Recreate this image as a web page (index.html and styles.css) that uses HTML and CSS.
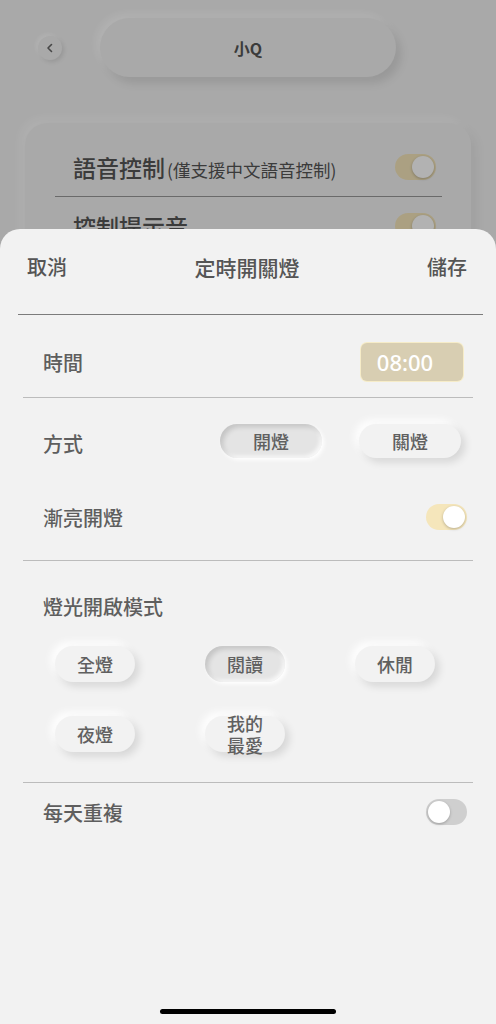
FILE: index.html
```html
<!DOCTYPE html>
<html lang="zh-Hant">
<head>
    <meta charset="UTF-8">
    <meta name="viewport" content="width=device-width, initial-scale=1.0">
    <title>定時開關燈</title>
    <link rel="stylesheet" href="styles.css">
</head>
<body>
    <div class="backdrop">
        <div class="nav">
            <div class="back-btn">
                <svg width="10" height="10" viewBox="0 0 10 10"><path d="M6.5 1.5 L3 5 L6.5 8.5" fill="none" stroke="#666" stroke-width="1.6" stroke-linecap="round" stroke-linejoin="round"/></svg>
            </div>
            <div class="nav-title">小Q</div>
        </div>
        <div class="card">
            <div class="card-row">
                <span class="card-label">語音控制<small>(僅支援中文語音控制)</small></span>
                <span class="toggle on"></span>
            </div>
            <div class="card-divider"></div>
            <div class="card-row">
                <span class="card-label">控制提示音</span>
                <span class="toggle on"></span>
            </div>
        </div>
    </div>

    <div class="sheet">
        <div class="sheet-head">
            <span>取消</span>
            <span class="sheet-title">定時開關燈</span>
            <span>儲存</span>
        </div>
        <div class="divider-dark"></div>

        <div class="row row-time">
            <span class="label">時間</span>
            <span class="time-box">08:00</span>
        </div>
        <div class="divider"></div>

        <div class="row row-method">
            <span class="label">方式</span>
            <div class="method-btns">
                <button class="pill wide pressed">開燈</button>
                <button class="pill wide">關燈</button>
            </div>
        </div>
        <div class="row row-fade">
            <span class="label">漸亮開燈</span>
            <span class="toggle on"></span>
        </div>
        <div class="divider"></div>

        <div class="mode-title label">燈光開啟模式</div>
        <div class="mode-grid">
            <button class="pill">全燈</button>
            <button class="pill pressed">閱讀</button>
            <button class="pill">休閒</button>
            <button class="pill">夜燈</button>
            <button class="pill">我的最愛</button>
        </div>
        <div class="divider"></div>

        <div class="row row-repeat">
            <span class="label">每天重複</span>
            <span class="toggle"></span>
        </div>

        <div class="home-bar"></div>
    </div>
</body>
</html>
```

FILE: styles.css
```css
* {
    box-sizing: border-box;
}

body, html {
    margin: 0;
    height: 1024px;
    overflow: hidden;
}

body {
    display: flex;
    flex-direction: column;
    background: #f2f2f2;
    font-family: 'Noto Sans CJK TC', 'Noto Sans', sans-serif;
    color: #606060;
}

/* page behind the sheet, dimmed */
.backdrop {
    position: relative;
    height: 249px;
    flex-shrink: 0;
    overflow: hidden;
    padding-top: 18px;
}

.backdrop::after {
    content: '';
    position: absolute;
    inset: 0;
    background: rgba(0, 0, 0, 0.3);
}

.nav {
    display: flex;
    align-items: center;
    height: 59px;
    padding-left: 38px;
}

.back-btn {
    width: 24px;
    height: 24px;
    border-radius: 50%;
    display: flex;
    justify-content: center;
    align-items: center;
    background: #f2f2f2;
    box-shadow: 2px 2px 4px rgba(0, 0, 0, 0.1), -2px -2px 4px #fff;
}

.nav-title {
    margin-left: 38px;
    width: 296px;
    height: 59px;
    border-radius: 30px;
    display: flex;
    justify-content: center;
    align-items: center;
    font-size: 16px;
    font-weight: 700;
    color: #555;
    background: #f2f2f2;
    box-shadow: 5px 6px 10px rgba(0, 0, 0, 0.1), -4px -4px 10px #fff;
}

.card {
    margin: 46px 25px 0;
    padding: 15px 29px 20px 30px;
    border-radius: 22px;
    background: #f3f3f3;
    box-shadow: 5px 5px 12px rgba(0, 0, 0, 0.06), -5px -5px 12px rgba(255, 255, 255, 0.7);
}

.card-row {
    display: flex;
    align-items: center;
    justify-content: space-between;
    height: 58px;
    padding: 0 6px 0 18px;
}

.card-label {
    font-size: 23px;
    font-weight: 500;
    color: #555;
}

.card-label small {
    font-size: 17.5px;
    font-weight: 400;
    margin-left: 2px;
}

.card-divider {
    height: 1px;
    background: #999;
}

/* bottom sheet */
.sheet {
    position: relative;
    z-index: 1;
    flex: 1;
    margin-top: -20px;
    display: flex;
    flex-direction: column;
    background: #f2f2f2;
    border-radius: 20px 20px 0 0;
}

.sheet-head {
    display: flex;
    justify-content: space-between;
    height: 85px;
    padding: 25px 29px 0 27px;
    font-size: 20px;
    line-height: 26px;
    font-weight: 500;
    color: #555;
}

.sheet-title {
    font-size: 21px;
}

.divider-dark {
    height: 1px;
    margin: 0 13px 0 18px;
    background: #7c7c7c;
}

.divider {
    height: 1px;
    margin: 0 23px;
    background: #bcbcbc;
}

.row {
    display: flex;
    align-items: center;
    justify-content: space-between;
    padding: 0 29px 0 43px;
}

.label {
    font-size: 20px;
    font-weight: 500;
    color: #5e5e5e;
}

.row-time {
    height: 82px;
    padding-top: 12px;
    padding-right: 33px;
}

.time-box {
    width: 102px;
    height: 38px;
    padding-right: 14px;
    border-radius: 6px;
    display: flex;
    justify-content: center;
    align-items: center;
    background: #d8ceb2;
    box-shadow: 0 0 0 1px #f6ecc8;
    color: #fff;
    font-family: 'Noto Sans', sans-serif;
    font-size: 22px;
    font-weight: 500;
}

.row-method {
    height: 86px;
    padding-right: 35px;
}

.row-method .label {
    padding-top: 5px;
}

.method-btns {
    display: flex;
    gap: 37px;
}

.row-fade {
    height: 66px;
    margin-bottom: 10px;
}

.pill {
    width: 80px;
    height: 36px;
    padding: 0 20px;
    border: none;
    border-radius: 18px;
    display: flex;
    justify-content: center;
    align-items: center;
    font-family: inherit;
    font-size: 18px;
    line-height: 22px;
    font-weight: 500;
    color: #606060;
    background: #f2f2f2;
    box-shadow: 4px 4px 8px rgba(0, 0, 0, 0.12), -4px -4px 8px #fff;
}

.pill.wide {
    width: 102px;
    height: 34px;
}

.pill.pressed {
    background: #e4e4e4;
    box-shadow: inset 3px 3px 5px rgba(0, 0, 0, 0.14), inset -2px -2px 4px rgba(255, 255, 255, 0.8), 2px 2px 4px #fff;
}

.mode-title {
    margin: 34px 0 0 43px;
    line-height: 24px;
}

.mode-grid {
    display: grid;
    grid-template-columns: repeat(3, 80px);
    column-gap: 70px;
    row-gap: 34px;
    padding: 27px 0 30px 55px;
}

.row-repeat {
    height: 60px;
    padding-bottom: 2px;
}

.toggle {
    position: relative;
    width: 41px;
    height: 26px;
    border-radius: 13px;
    background: #cfcfcf;
}

.toggle::after {
    content: '';
    position: absolute;
    top: 2px;
    left: 2px;
    width: 22px;
    height: 22px;
    border-radius: 50%;
    background: #fff;
    box-shadow: 0 1px 3px rgba(0, 0, 0, 0.25);
}

.toggle.on {
    background: #f5e6bb;
}

.toggle.on::after {
    left: 17px;
}

.home-bar {
    width: 176px;
    height: 5px;
    margin: auto auto 10px;
    border-radius: 3px;
    background: #000;
}
```
